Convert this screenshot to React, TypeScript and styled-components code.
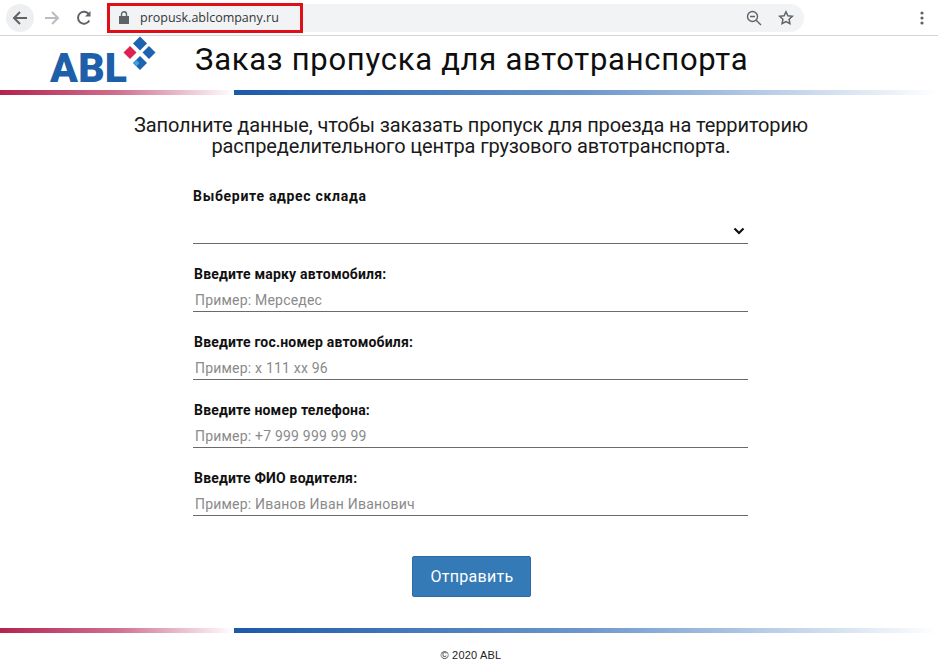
import React from "react";
import styled, { createGlobalStyle } from "styled-components";

const Global = createGlobalStyle`
  html, body { margin: 0; padding: 0; background: #fff; }
  body { font-family: Roboto, "Liberation Sans", sans-serif; color: #111; }
  input::placeholder { color: #8a8a8a; opacity: 1; }
`;

const Page = styled.div`
  width: 938px;
  height: 670px;
  overflow: hidden;
  display: flex;
  flex-direction: column;
`;

const Toolbar = styled.div`
  height: 35px;
  border-bottom: 1px solid #d4d5d7;
  display: flex;
  align-items: center;
  padding: 0 0 0 6px;
  flex: none;
`;

const NavButton = styled.div<{ $active?: boolean }>`
  width: 28px;
  height: 28px;
  border-radius: 50%;
  margin-right: 4px;
  background: ${(p) => (p.$active ? "#eeeff1" : "transparent")};
  display: flex;
  align-items: center;
  justify-content: center;
  flex: none;
`;

const Omnibox = styled.div`
  margin-left: 5px;
  width: 697px;
  height: 28px;
  background: #f1f3f4;
  border-radius: 0 14px 14px 0;
  display: flex;
  align-items: center;
  flex: none;
`;

const UrlHighlight = styled.div`
  width: 196px;
  height: 30px;
  box-sizing: border-box;
  border: 3px solid #e00f15;
  display: flex;
  align-items: center;
  padding-left: 9px;
  gap: 11px;
  font-family: "Open Sans", sans-serif;
  font-size: 12.500px;
  color: #33363a;
  white-space: nowrap;
`;

const OmniIcons = styled.div`
  margin-left: auto;
  display: flex;
  align-items: center;
  gap: 16px;
  padding-right: 10px;
`;

const Menu = styled.div`
  margin-left: 116px;
  display: flex;
  align-items: center;
`;

const Header = styled.header`
  height: 54px;
  flex: none;
  display: flex;
  align-items: flex-start;
  padding-left: 50px;
`;

const Logo = styled.div`
  position: relative;
  width: 108px;
  height: 50px;
  flex: none;
  display: flex;
  align-items: flex-end;
`;

const LogoWord = styled.span`
  font: 900 41px/1 Roboto, "Liberation Sans", sans-serif;
  color: #1d5fa8;
  letter-spacing: 0.2px;
  position: relative;
  top: 3px;
`;

const LogoMark = styled.svg`
  position: absolute;
  left: 71px;
  top: 0;
`;

const Title = styled.h1`
  margin: 6px 0 0 37px;
  font-size: 31px;
  line-height: 36px;
  font-weight: 400;
  letter-spacing: 0.73px;
  color: #0e0e0e;
  white-space: nowrap;
`;

const Stripe = styled.div`
  height: 5px;
  flex: none;
  display: flex;
`;

const StripeRed = styled.div`
  width: 234px;
  background: linear-gradient(90deg, #b42350 0%, #cf6f8e 50%, #fff 100%);
`;

const StripeBlue = styled.div`
  flex: 1;
  background: linear-gradient(90deg, #1b5aa9 0%, #6d97cd 50%, #fff 100%);
`;

const Intro = styled.p`
  margin: 20px 0 0;
  padding-left: 4px;
  text-align: center;
  font-size: 20px;
  line-height: 21px;
  letter-spacing: -0.12px;
  color: #1a1a1a;
`;

const Form = styled.form`
  width: 555px;
  margin: 30px 0 0 193px;
  display: flex;
  flex-direction: column;
`;

const Field = styled.div<{ $h: number }>`
  height: ${(p) => p.$h}px;
  display: flex;
  flex-direction: column;
`;

const SelectLabel = styled.div`
  font-size: 14px;
  font-weight: 700;
  line-height: 18px;
  letter-spacing: 0.7px;
  color: #111;
`;

const Label = styled.label`
  font-size: 14px;
  font-weight: 700;
  line-height: 18px;
  letter-spacing: 0.2px;
  color: #111;
  padding-left: 1px;
`;

const SelectBox = styled.div`
  margin-top: 10px;
  height: 25px;
  border-bottom: 1px solid #6a6a6a;
  display: flex;
  align-items: center;
  justify-content: flex-end;
  padding: 3px 3px 0 0;
`;

const Input = styled.input`
  margin-top: 6px;
  height: 22px;
  box-sizing: content-box;
  border: 0;
  border-bottom: 1px solid #6a6a6a;
  outline: none;
  padding: 0 0 0 2px;
  background: transparent;
  font: 400 14px Roboto, sans-serif;
  letter-spacing: 0.2px;
  width: 553px;
`;

const Actions = styled.div`
  display: flex;
  justify-content: center;
  margin-top: 37px;
  padding-left: 2px;
`;

const Submit = styled.button`
  width: 119px;
  height: 41px;
  border: 1px solid #2e6da4;
  border-radius: 2px;
  background: #337ab7;
  color: #fff;
  font: 400 16px Roboto, sans-serif;
  letter-spacing: 0.3px;
  padding-left: 7px;
`;

const Footer = styled.footer`
  margin-top: 31px;
  flex: none;
`;

const Copy = styled.div`
  margin-top: 16px;
  text-align: center;
  font: 400 11px "Liberation Sans", Arial, sans-serif;
  letter-spacing: 0.2px;
  color: #222;
  line-height: 13px;
  padding-left: 4px;
`;

const Ic = { fill: "none", stroke: "#5f6368", strokeWidth: 2 } as const;

export default function App() {
  return (
    <Page>
      <Global />
      <Toolbar>
        <NavButton $active>
          <svg width="16" height="16" viewBox="0 0 16 16" {...Ic}>
            <path d="M15 8H2M8 2 2 8l6 6" />
          </svg>
        </NavButton>
        <NavButton>
          <svg width="16" height="16" viewBox="0 0 16 16" fill="none" stroke="#b9bcc0" strokeWidth="2">
            <path d="M1 8h13M8 2l6 6-6 6" />
          </svg>
        </NavButton>
        <NavButton>
          <svg width="16" height="16" viewBox="0 0 16 16" {...Ic}>
            <path d="M13.300 10.600A6 6 0 1 1 13 4.400" />
            <path d="M14.500 1v5.500H9" fill="#5f6368" stroke="none" />
          </svg>
        </NavButton>
        <Omnibox>
          <UrlHighlight>
            <svg width="10" height="13" viewBox="0 0 10 13">
              <path d="M0 5h10v8H0z" fill="#5f6368" />
              <path d="M2.500 5V3.200a2.500 2.500 0 0 1 5 0V5" fill="none" stroke="#5f6368" strokeWidth="1.400" />
            </svg>
            <span>propusk.ablcompany.ru</span>
          </UrlHighlight>
          <OmniIcons>
            <svg width="16" height="16" viewBox="0 0 16 16" fill="none" stroke="#5f6368" strokeWidth="1.400">
              <circle cx="6.500" cy="6.500" r="5" />
              <path d="M4 6.500h5M10.200 10.200 15 15" />
            </svg>
            <svg width="16" height="16" viewBox="0 0 16 16" fill="none" stroke="#5f6368" strokeWidth="1.500">
              <path d="m8 1.800 1.900 4 4.400.5-3.200 3 .8 4.400L8 11.600l-3.900 2.100.8-4.400-3.200-3 4.400-.5z" />
            </svg>
          </OmniIcons>
        </Omnibox>
        <Menu>
          <svg width="4" height="14" viewBox="0 0 4 14" fill="#5f6368">
            <circle cx="2" cy="2" r="1.600" />
            <circle cx="2" cy="7" r="1.600" />
            <circle cx="2" cy="12" r="1.600" />
          </svg>
        </Menu>
      </Toolbar>
      <Header>
        <Logo>
          <LogoWord>ABL</LogoWord>
          <LogoMark width="36" height="34" viewBox="0 0 36 34">
            <path d="M19 0.500l7 7-7 7-7-7z" fill="#1d64b0" />
            <path d="M28 10l6.500 6.500-6.500 6.500-6.500-6.500z" fill="#1d64b0" />
            <path d="M19 20l7 7-7 7-7-7z" fill="#1d64b0" />
            <path d="M12.500 27.500l3-3.500 3 3-3 3.500z" fill="#3fa0dc" />
            <path d="M9 10l6.500 6.500L9 23l-6.500-6.500z" fill="#dc2350" />
          </LogoMark>
        </Logo>
        <Title>Заказ пропуска для автотранспорта</Title>
      </Header>
      <Stripe>
        <StripeRed />
        <StripeBlue />
      </Stripe>
      <Intro>
        Заполните данные, чтобы заказать пропуск для проезда на территорию
        <br />
        распределительного центра грузового автотранспорта.
      </Intro>
      <Form>
        <Field $h={78}>
          <SelectLabel>Выберите адрес склада</SelectLabel>
          <SelectBox>
            <svg width="12" height="8" viewBox="0 0 12 8" fill="none" stroke="#111" strokeWidth="2.200">
              <path d="M1.500 1.500 6 6l4.500-4.500" />
            </svg>
          </SelectBox>
        </Field>
        <Field $h={68}>
          <Label>Введите марку автомобиля:</Label>
          <Input placeholder="Пример: Мерседес" />
        </Field>
        <Field $h={68}>
          <Label>Введите гос.номер автомобиля:</Label>
          <Input placeholder="Пример: х 111 хх 96" />
        </Field>
        <Field $h={68}>
          <Label>Введите номер телефона:</Label>
          <Input placeholder="Пример: +7 999 999 99 99" />
        </Field>
        <Field $h={50}>
          <Label>Введите ФИО водителя:</Label>
          <Input placeholder="Пример: Иванов Иван Иванович" />
        </Field>
        <Actions>
          <Submit type="button">Отправить</Submit>
        </Actions>
      </Form>
      <Footer>
        <Stripe>
          <StripeRed />
          <StripeBlue />
        </Stripe>
        <Copy>© 2020 ABL</Copy>
      </Footer>
    </Page>
  );
}
